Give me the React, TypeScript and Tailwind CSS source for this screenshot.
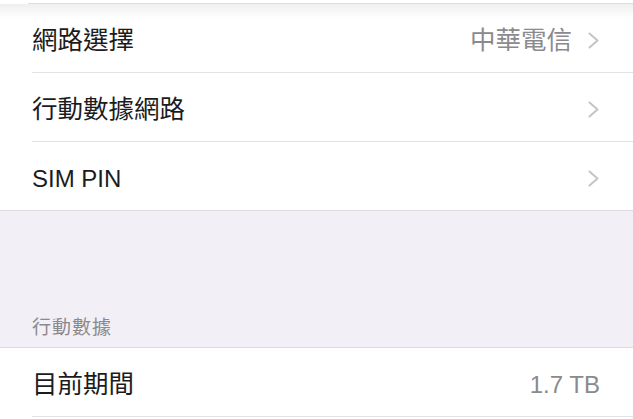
import React from "react";

const font = { fontFamily: '"Liberation Sans", "Noto Sans CJK TC", sans-serif' };

function Chevron() {
  return (
    <svg width="11" height="17" viewBox="0 0 11 17" className="shrink-0">
      <polyline points="1.5,1.5 9.5,8.5 1.5,15.5" fill="none" stroke="#c4c4c8" strokeWidth="2" strokeLinecap="round" strokeLinejoin="round" />
    </svg>
  );
}

function Row({ label, value, chevron = true, labelClass = "text-[25.5px]", bg = "bg-white" }: { label: string; value?: string; chevron?: boolean; labelClass?: string; bg?: string }) {
  return (
    <div className={`h-[68px] flex items-center pl-8 ${chevron ? "pr-[34px]" : "pr-[33px]"} ${bg}`}>
      <span className={`${labelClass} text-[#1c1c1e] leading-none translate-y-[3px]`}>{label}</span>
      <div className="ml-auto flex items-center gap-4 translate-y-[2px]">
        {value && <span className={`${chevron ? "text-[25.5px]" : "text-[24px]"} text-[#8a8a8e] leading-none translate-y-px`}>{value}</span>}
        {chevron && <Chevron />}
      </div>
    </div>
  );
}

export default function App() {
  return (
    <div className="w-[633px] h-[419px] overflow-hidden bg-white" style={font}>
      <div className="h-[3px] bg-white" />
      <div className="h-px ml-[28px] bg-[#dedee2]" />
      <Row label="網路選擇" value="中華電信" bg="bg-[linear-gradient(to_bottom,#efefef,#ffffff_14px)]" />
      <div className="h-px ml-8 bg-[#e2e2e6]" />
      <Row label="行動數據網路" />
      <div className="h-px ml-8 bg-[#e2e2e6]" />
      <Row label="SIM PIN" labelClass="text-[24px]" />
      <div className="h-px bg-[#dcdce0]" />
      <div className="h-[136px] bg-[#f2eff6] flex items-end pl-8 pb-[10px]">
        <span className="text-[19px] tracking-[1px] text-[#8a8a8e] leading-none">行動數據</span>
      </div>
      <div className="h-px bg-[#dcdce0]" />
      <Row label="目前期間" value="1.7 TB" chevron={false} />
      <div className="h-px ml-8 bg-[#e2e2e6]" />
    </div>
  );
}
